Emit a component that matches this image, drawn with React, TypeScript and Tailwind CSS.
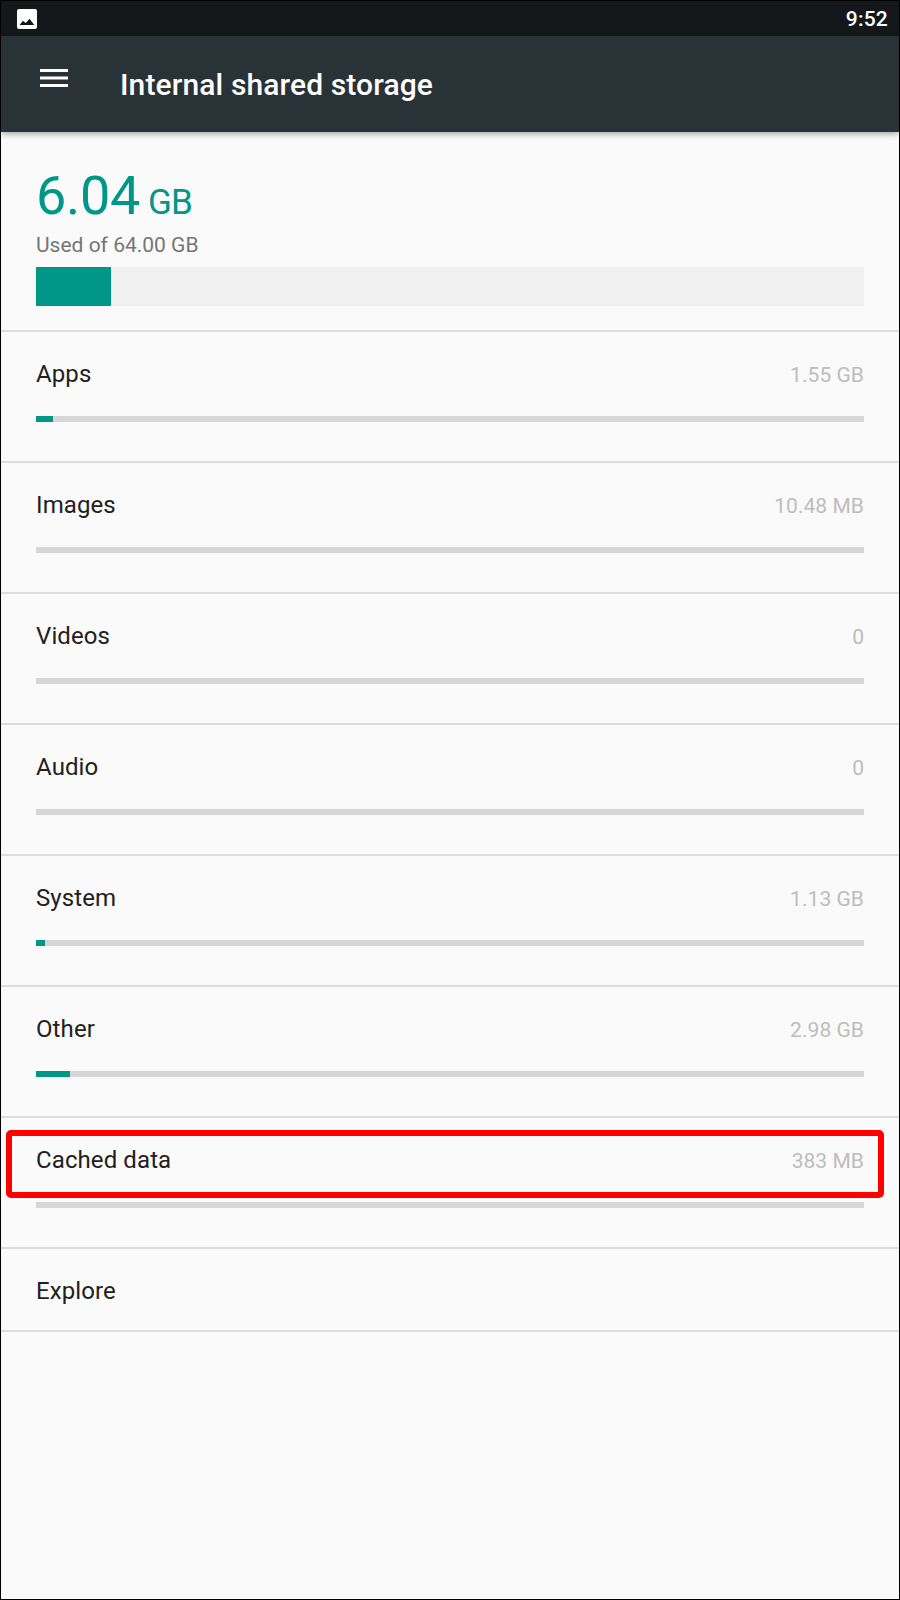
type StorageItem = {
  label: string;
  value: string;
  used: number;
  highlighted?: boolean;
};

const items: StorageItem[] = [
  { label: "Apps", value: "1.55 GB", used: 17 },
  { label: "Images", value: "10.48 MB", used: 0 },
  { label: "Videos", value: "0", used: 0 },
  { label: "Audio", value: "0", used: 0 },
  { label: "System", value: "1.13 GB", used: 9 },
  { label: "Other", value: "2.98 GB", used: 34 },
  { label: "Cached data", value: "383 MB", used: 0, highlighted: true },
];

const BAR_WIDTH = 828;

const StatusBar = () => (
  <div className="flex h-[35px] items-center justify-between bg-[#14181a] pl-4 pr-[11px]">
    <svg width="20" height="20" viewBox="0 0 20 20">
      <rect width="20" height="20" rx="2" fill="#fff" />
      <path d="M2.5 16 6 11.7 8.8 14 12.5 9.7 17.3 16z" fill="#14181a" />
    </svg>
    <span className="text-[21px] leading-7 font-medium tracking-[0.2px] text-white">
      9:52
    </span>
  </div>
);

const Header = () => (
  <header className="relative flex h-24 bg-[#283237] shadow-[0_2px_6px_rgba(0,0,0,0.35)]">
    <svg
      className="mt-[33px] ml-[39px]"
      width="28"
      height="18"
      viewBox="0 0 28 18"
      fill="#fff"
    >
      <rect width="28" height="3" />
      <rect y="7.5" width="28" height="3" />
      <rect y="15" width="28" height="3" />
    </svg>
    <h1 className="mt-[31px] ml-[52px] text-[30px] leading-9 font-medium tracking-[0.12px] text-white">
      Internal shared storage
    </h1>
  </header>
);

const Summary = () => (
  <section className="h-[200px] border-b-2 border-[#dcdcdc] px-[35px] pt-8">
    <div className="flex h-16 items-baseline text-[#009688]">
      <span className="text-[54px] leading-[64px] tracking-[-0.3px]">6.04</span>
      <span className="ml-2 text-[35px] tracking-[-1px]">GB</span>
    </div>
    <p className="mt-[5px] text-[21px] leading-6 text-[#757575]">
      Used of 64.00 GB
    </p>
    <div className="mt-2.5 h-[39px] bg-[#f0f0f0]">
      <div className="h-full w-[75px] bg-[#009688]" />
    </div>
  </section>
);

const StorageRow = ({ label, value, used, highlighted }: StorageItem) => (
  <li className="relative h-[131px] border-b-2 border-[#dcdcdc] px-[35px] pt-7">
    <div className="flex h-7 items-baseline justify-between">
      <span className="text-2xl leading-7 tracking-[0.1px] text-[#212121]">
        {label}
      </span>
      <span className="text-[21px] leading-7 tracking-[0.05px] text-[#bdbdbd]">
        {value}
      </span>
    </div>
    <div className="mt-7 h-1.5 bg-[#d6d6d6]">
      <div
        className="h-full bg-[#009688]"
        style={{ width: `${(used / BAR_WIDTH) * 100}%` }}
      />
    </div>
    {highlighted && (
      <div className="absolute top-3 left-[5px] h-[68px] w-[878px] rounded-[5px] border-6 border-[#ff0000]" />
    )}
  </li>
);

const App = () => {
  return (
    <div className="h-[1600px] w-[900px] overflow-hidden border border-black bg-[#fafafa] font-[Roboto,sans-serif]">
      <StatusBar />
      <Header />
      <Summary />
      <ul>
        {items.map((item) => (
          <StorageRow key={item.label} {...item} />
        ))}
        <li className="h-[83px] border-b-2 border-[#dcdcdc] px-[35px] pt-7 text-2xl leading-7 tracking-[0.1px] text-[#212121]">
          Explore
        </li>
      </ul>
    </div>
  );
};

export default App;
